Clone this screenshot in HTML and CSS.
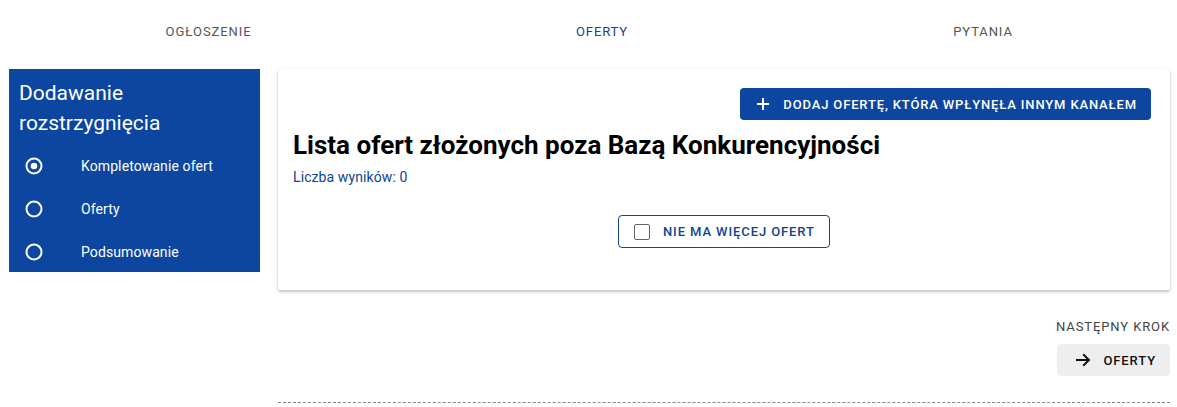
FILE: index.html
```html
<!DOCTYPE html>
<html lang="pl">
<head>
<meta charset="utf-8">
<link rel="stylesheet" href="styles.css">
</head>
<body>
<div class="page">
  <nav class="tabs">
    <div class="tab">OGŁOSZENIE</div>
    <div class="tab active">OFERTY</div>
    <div class="tab">PYTANIA</div>
  </nav>
  <div class="main">
    <aside class="sidebar">
      <h2 class="side-title">Dodawanie rozstrzygnięcia</h2>
      <ul class="steps">
        <li class="step">
          <svg class="radio" viewBox="0 0 20 20" width="20" height="20"><circle cx="10" cy="10" r="7.5" fill="none" stroke="#fff" stroke-width="2"/><circle cx="10" cy="10" r="3.3" fill="#fff"/></svg>
          <span>Kompletowanie ofert</span>
        </li>
        <li class="step">
          <svg class="radio" viewBox="0 0 20 20" width="20" height="20"><circle cx="10" cy="10" r="7.5" fill="none" stroke="#fff" stroke-width="2"/></svg>
          <span>Oferty</span>
        </li>
        <li class="step">
          <svg class="radio" viewBox="0 0 20 20" width="20" height="20"><circle cx="10" cy="10" r="7.5" fill="none" stroke="#fff" stroke-width="2"/></svg>
          <span>Podsumowanie</span>
        </li>
      </ul>
    </aside>
    <section class="content">
      <div class="card">
        <div class="card-actions">
          <button class="btn-primary">
            <svg viewBox="0 0 14 14" width="14" height="14"><path d="M7 1v12M1 7h12" stroke="#fff" stroke-width="2" fill="none"/></svg>
            <span>DODAJ OFERTĘ, KTÓRA WPŁYNĘŁA INNYM KANAŁEM</span>
          </button>
        </div>
        <h1 class="card-title">Lista ofert złożonych poza Bazą Konkurencyjności</h1>
        <div class="count">Liczba wyników: 0</div>
        <div class="center-row">
          <button class="btn-outline">
            <span class="checkbox"></span>
            <span>NIE MA WIĘCEJ OFERT</span>
          </button>
        </div>
      </div>
      <div class="next">
        <div class="next-label">NASTĘPNY KROK</div>
        <button class="btn-next">
          <svg viewBox="0 0 18 18" width="18" height="18"><path d="M2 9h13.5M9.5 3l6 6-6 6" stroke="#111" stroke-width="2" fill="none"/></svg>
          <span>OFERTY</span>
        </button>
      </div>
      <div class="dashed"></div>
    </section>
  </div>
</div>
</body>
</html>
```
FILE: styles.css
```css
* { box-sizing: border-box; }
html, body { margin: 0; padding: 0; background: #fff; }
body { font-family: Roboto, "Noto Sans", "Liberation Sans", sans-serif; color: #111; }
.page { padding: 0 7px 0 9px; }
.tabs {
  display: grid;
  grid-template-columns: 399px 388px 374px;
  height: 62px;
}
.tab {
  display: flex;
  align-items: center;
  justify-content: center;
  font-size: 13px;
  letter-spacing: 0.9px;
  color: #555;
}
.tab.active { color: #0d4593; }
.main {
  display: grid;
  grid-template-columns: 251px 892px;
  column-gap: 18px;
  margin-top: 7px;
  align-items: start;
}
.sidebar {
  background: #0c46a1;
  color: #fff;
  height: 203px;
  padding: 9px 10px 0 10px;
}
.side-title {
  margin: 0;
  font-size: 21px;
  font-weight: 400;
  line-height: 30px;
}
.steps { list-style: none; margin: 6px 0 0 0; padding: 0; }
.step {
  display: flex;
  align-items: center;
  height: 43px;
  font-size: 14px;
  letter-spacing: 0.1px;
}
.radio { margin-left: 5px; margin-right: 37px; flex: none; }
.content { display: flex; flex-direction: column; }
.card {
  background: #fff;
  height: 221px;
  border-radius: 2px;
  box-shadow: 0 2px 3px rgba(0,0,0,0.22), 0 0 2px rgba(0,0,0,0.08);
  padding: 19px 19px 0 15px;
}
.card-actions { display: flex; justify-content: flex-end; }
.btn-primary {
  display: flex;
  align-items: center;
  gap: 13px;
  height: 32px;
  padding: 0 14px 0 16px;
  background: #0c46a1;
  color: #fff;
  border: none;
  border-radius: 4px;
  font-family: inherit;
  font-size: 13px;
  font-weight: 500;
  letter-spacing: 0.85px;
  white-space: nowrap;
}
.card-title {
  margin: 9px 0 0 0;
  font-size: 26px;
  font-weight: 700;
  line-height: 32px;
  color: #000;
}
.count {
  margin-top: 6px;
  font-size: 14px;
  line-height: 20px;
  color: #0d4593;
  letter-spacing: 0.1px;
}
.center-row { display: flex; justify-content: center; margin-top: 28px; padding-left: 4px; }
.btn-outline {
  display: flex;
  align-items: center;
  gap: 13px;
  width: 212px;
  height: 33px;
  padding: 0 15px;
  background: #fff;
  border: 1px solid #0d4593;
  border-radius: 4px;
  color: #0d4593;
  font-family: inherit;
  font-size: 13px;
  font-weight: 500;
  letter-spacing: 0.9px;
  white-space: nowrap;
}
.checkbox {
  width: 16px;
  height: 16px;
  border: 1.5px solid #666;
  border-radius: 2px;
  flex: none;
}
.next {
  display: flex;
  flex-direction: column;
  align-items: flex-end;
  margin-top: 30px;
}
.next-label {
  font-size: 13px;
  line-height: 14px;
  letter-spacing: 0.9px;
  color: #444;
}
.btn-next {
  display: flex;
  align-items: center;
  gap: 12px;
  margin-top: 10px;
  width: 113px;
  height: 32px;
  padding: 0 14px 0 17px;
  background: #eeeeee;
  border: none;
  border-radius: 4px;
  color: #111;
  font-family: inherit;
  font-size: 13px;
  font-weight: 500;
  letter-spacing: 0.9px;
  white-space: nowrap;
}
.dashed {
  margin-top: 26px;
  border-top: 1px dashed #888;
}
```
